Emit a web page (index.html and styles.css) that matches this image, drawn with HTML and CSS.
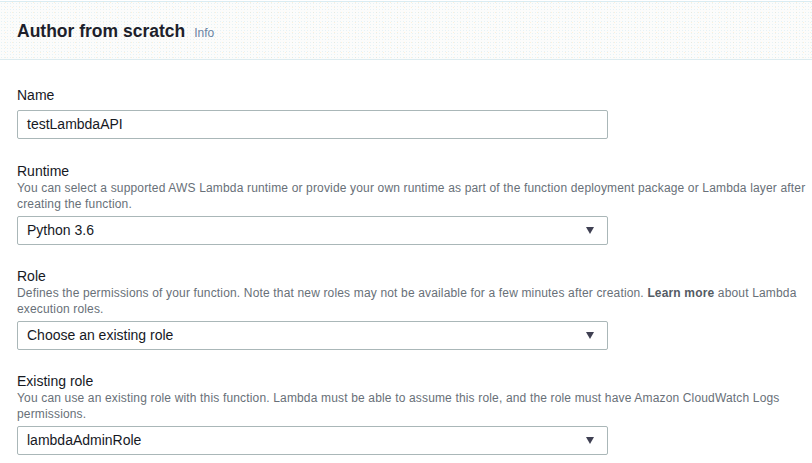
FILE: index.html
```html
<!DOCTYPE html>
<html>
<head>
<meta charset="utf-8">
<link rel="stylesheet" href="styles.css">
</head>
<body>
<div class="panel">
  <div class="panel-header">
    <h2 class="title">Author from scratch</h2>
    <a class="info">Info</a>
  </div>
  <div class="panel-body">
    <div class="field field-first">
      <div class="label label-plain">Name</div>
      <div class="control input">testLambdaAPI</div>
    </div>
    <div class="field">
      <div class="label">Runtime</div>
      <div class="desc">You can select a supported AWS Lambda runtime or provide your own runtime as part of the function deployment package or Lambda layer after creating the function.</div>
      <div class="control select"><span>Python 3.6</span><span class="arrow"></span></div>
    </div>
    <div class="field">
      <div class="label">Role</div>
      <div class="desc">Defines the permissions of your function. Note that new roles may not be available for a few minutes after creation. <b>Learn more</b> about Lambda<br>execution roles.</div>
      <div class="control select"><span>Choose an existing role</span><span class="arrow"></span></div>
    </div>
    <div class="field">
      <div class="label">Existing role</div>
      <div class="desc">You can use an existing role with this function. Lambda must be able to assume this role, and the role must have Amazon CloudWatch Logs permissions.</div>
      <div class="control select"><span>lambdaAdminRole</span><span class="arrow"></span></div>
    </div>
  </div>
</div>
</body>
</html>
```

FILE: styles.css
```css
html, body {
  margin: 0;
  padding: 0;
  background: #ffffff;
  font-family: "Liberation Sans", Arial, sans-serif;
  color: #16191f;
}
.panel {
  width: 812px;
}
.panel-header {
  height: 57px;
  margin-top: 1px;
  border-top: 1px solid #d9ecf2;
  border-bottom: 1px solid #dcebef;
  background-color: #fcfcfb;
  background-image:
    radial-gradient(circle, rgba(170, 215, 235, 0.28) 0.6px, transparent 0.9px),
    radial-gradient(circle, rgba(255, 200, 120, 0.25) 0.6px, transparent 0.9px);
  background-size: 3px 3px, 7px 5px;
  background-position: 0 0, 2px 3px;
  display: flex;
  align-items: center;
  padding-left: 17px;
}
.title {
  margin: 0;
  font-size: 17.5px;
  font-weight: bold;
  color: #1d1f2b;
  line-height: 22px;
}
.info {
  margin-left: 9px;
  font-size: 12px;
  color: #6a84a2;
  margin-top: 4px;
}
.panel-body {
  padding: 26px 0 0 17px;
}
.field {
  margin-bottom: 22px;
  width: 795px;
}
.field-first {
  margin-bottom: 23px;
}
.label {
  font-size: 14px;
  line-height: 18px;
  color: #16191f;
}
.label-plain {
  margin-bottom: 6px;
}
.desc {
  font-size: 12px;
  letter-spacing: 0.16px;
  line-height: 16px;
  color: #687078;
  margin-bottom: 4px;
}
.desc b {
  color: #545b64;
}
.control {
  width: 591px;
  height: 29px;
  box-sizing: border-box;
  border: 1px solid #aab7b8;
  border-radius: 2px;
  font-size: 14px;
  line-height: 27px;
  padding: 0 13px 0 9px;
  color: #16191f;
  background: #fff;
}
.select {
  display: flex;
  justify-content: space-between;
  align-items: center;
}
.arrow {
  width: 0;
  height: 0;
  border-left: 4.5px solid transparent;
  border-right: 4.5px solid transparent;
  border-top: 7px solid #3f4052;
}
```
